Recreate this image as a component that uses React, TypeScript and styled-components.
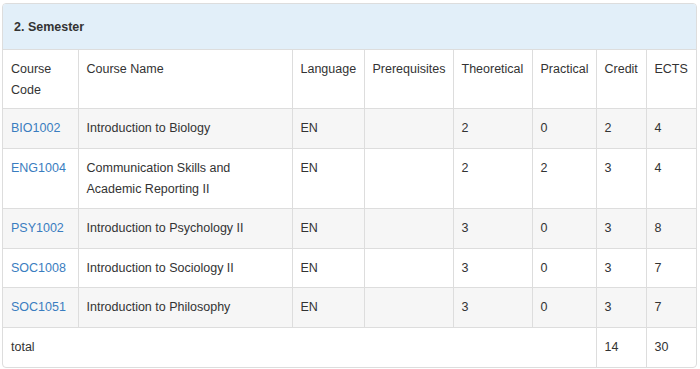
import styled, { createGlobalStyle } from 'styled-components';

type Course = {
  code: string;
  name: string;
  lang: string;
  prereq: string;
  theoretical: number;
  practical: number;
  credit: number;
  ects: number;
};

const courses: Course[] = [
  { code: 'BIO1002', name: 'Introduction to Biology', lang: 'EN', prereq: '', theoretical: 2, practical: 0, credit: 2, ects: 4 },
  { code: 'ENG1004', name: 'Communication Skills and Academic Reporting II', lang: 'EN', prereq: '', theoretical: 2, practical: 2, credit: 3, ects: 4 },
  { code: 'PSY1002', name: 'Introduction to Psychology II', lang: 'EN', prereq: '', theoretical: 3, practical: 0, credit: 3, ects: 8 },
  { code: 'SOC1008', name: 'Introduction to Sociology II', lang: 'EN', prereq: '', theoretical: 3, practical: 0, credit: 3, ects: 7 },
  { code: 'SOC1051', name: 'Introduction to Philosophy', lang: 'EN', prereq: '', theoretical: 3, practical: 0, credit: 3, ects: 7 },
];

const columns = [
  { label: 'Course Code', width: 75 },
  { label: 'Course Name', width: 214 },
  { label: 'Language', width: 72 },
  { label: 'Prerequisites', width: 89 },
  { label: 'Theoretical', width: 79 },
  { label: 'Practical', width: 64 },
  { label: 'Credit', width: 50 },
  { label: 'ECTS', width: 50 },
];

export default function App() {
  const totalCredit = courses.reduce((sum, c) => sum + c.credit, 0);
  const totalEcts = courses.reduce((sum, c) => sum + c.ects, 0);

  return (
    <>
      <GlobalStyle />
      <Panel>
        <Heading>2. Semester</Heading>
        <Table>
          <colgroup>
            {columns.map((col) => (
              <col key={col.label} style={{ width: col.width }} />
            ))}
          </colgroup>
          <thead>
            <tr>
              {columns.map((col) => (
                <HeadCell key={col.label}>
                  {col.label === 'Course Code' ? (
                    <>
                      Course
                      <br />
                      Code
                    </>
                  ) : (
                    col.label
                  )}
                </HeadCell>
              ))}
            </tr>
          </thead>
          <tbody>
            {courses.map((c) => (
              <Row key={c.code}>
                <Cell>
                  <CodeLink href="#">{c.code}</CodeLink>
                </Cell>
                <Cell>{c.name}</Cell>
                <Cell>{c.lang}</Cell>
                <Cell>{c.prereq}</Cell>
                <Cell>{c.theoretical}</Cell>
                <Cell>{c.practical}</Cell>
                <Cell>{c.credit}</Cell>
                <Cell>{c.ects}</Cell>
              </Row>
            ))}
            <Row>
              <Cell colSpan={6}>total</Cell>
              <Cell>{totalCredit}</Cell>
              <Cell>{totalEcts}</Cell>
            </Row>
          </tbody>
        </Table>
      </Panel>
    </>
  );
}

const GlobalStyle = createGlobalStyle`
  body {
    margin: 0;
    background: #ffffff;
    font-family: 'Liberation Sans', Arial, sans-serif;
    color: #333333;
  }
`;

const Panel = styled.div`
  margin: 3px 3px 0 2px;
  border: 1px solid #dddddd;
  border-radius: 4px;
  overflow: hidden;
  background: #ffffff;
`;

const Heading = styled.div`
  height: 44px;
  padding: 1px 11px 0;
  display: flex;
  align-items: center;
  background: #e2eff9;
  border-bottom: 1px solid #dddddd;
  font-size: 12.5px;
  font-weight: bold;
  color: #333333;
`;

const Table = styled.table`
  width: 100%;
  table-layout: fixed;
  border-collapse: collapse;
  font-size: 12.5px;
  line-height: 21px;
`;

const HeadCell = styled.td`
  padding: 9px 8px 7px;
  vertical-align: top;
  text-align: left;
  font-weight: normal;
  border-left: 1px solid #dddddd;
  border-bottom: 1px solid #dddddd;
  &:first-child {
    border-left: 0;
  }
`;

const Row = styled.tr`
  &:nth-child(odd) {
    background: #f6f6f6;
  }
`;

const Cell = styled.td`
  padding: 9px 8px 8.6px;
  vertical-align: top;
  border-left: 1px solid #dddddd;
  border-top: 1px solid #dddddd;
  &:first-child {
    border-left: 0;
  }
  tr:first-child > & {
    border-top: 0;
  }
`;

const CodeLink = styled.a`
  color: #3a7dc0;
  text-decoration: none;
`;
